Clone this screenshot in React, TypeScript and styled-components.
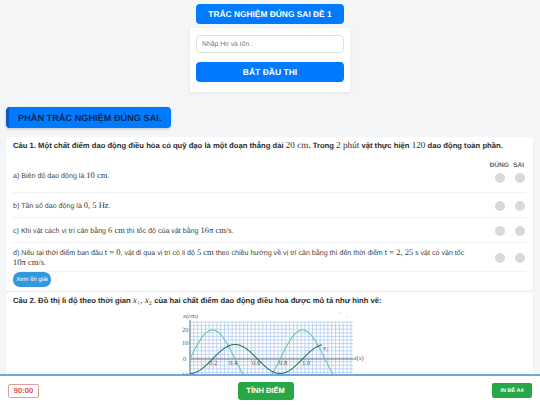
import React from "react";
import styled, { createGlobalStyle } from "styled-components";

const Global = createGlobalStyle`
  html, body { margin: 0; padding: 0; background: #f3f5f7; }
  html { scrollbar-width: none; }
  body { font-family: "Liberation Sans", Arial, sans-serif; color: #333; text-rendering: geometricPrecision; }
  * { box-sizing: border-box; }
  input, button { text-rendering: geometricPrecision; }
`;

const Page = styled.div`
  padding-top: 4px;
  display: flex;
  flex-direction: column;
`;
const TopColumn = styled.div`
  width: 160px;
  margin: 0 auto;
  display: flex;
  flex-direction: column;
  align-items: center;
`;
const TitleButton = styled.div`
  width: 148px;
  height: 20px;
  background: #007bff;
  color: #fff;
  border-radius: 4px;
  font-size: 8.4px;
  font-weight: 700;
  display: flex;
  align-items: center;
  justify-content: center;
  white-space: nowrap;
`;
const LoginCard = styled.div`
  width: 160px;
  height: 64px;
  margin-top: 4px;
  background: #fff;
  box-shadow: 0 1px 3px rgba(0,0,0,.08);
  padding: 7px 6px 0;
  display: flex;
  flex-direction: column;
`;
const NameInput = styled.input`
  width: 148px;
  height: 18px;
  border: 1px solid #dfe2e5;
  border-radius: 4px;
  padding: 0 5px;
  font: 6.8px "Liberation Sans", Arial, sans-serif;
  background: #fff;
  &::placeholder { color: #777; opacity: 1; }
`;
const StartButton = styled.button`
  width: 148px;
  height: 20px;
  margin-top: 9px;
  background: #007bff;
  color: #fff;
  border: 0;
  border-radius: 4px;
  padding: 0;
  font: 700 8.5px "Liberation Sans", Arial, sans-serif;
`;
const SectionHeader = styled.h2`
  width: 165px;
  height: 21px;
  margin: 15px 0 0 6px;
  background: #007bff;
  border-left: 3px solid #0a58ca;
  border-radius: 4px;
  box-shadow: 0 1px 3px rgba(0,0,0,.2);
  color: #0a2a55;
  font-size: 9.2px;
  font-weight: 700;
  display: flex;
  align-items: center;
  padding-left: 9px;
  white-space: nowrap;
`;
const QuestionCard = styled.section`
  width: 527px;
  margin: 9px 0 0 6px;
  padding: 1px 7px 4px;
  background: #fff;
  border-radius: 4px;
  box-shadow: 0 1px 2px rgba(0,0,0,.06);
  & + & { margin-top: 1px; }
`;
const QuestionTitle = styled.p`
  margin: 0;
  height: 16px;
  font-size: 7.66px;
  line-height: 16px;
  font-weight: 700;
  color: #2b2b2b;
  white-space: nowrap;
`;
const MathText = styled.span`
  font-family: "Liberation Serif", "DejaVu Serif", serif;
  font-weight: 400;
  font-size: 1.2em;
  line-height: 0;
  color: #333;
`;
const Rows = styled.div`
  display: flex;
  flex-direction: column;
`;
const Row = styled.div<{ $h: number }>`
  height: ${p => p.$h}px;
  padding-top: 2px;
  display: flex;
  align-items: center;
  justify-content: space-between;
  border-bottom: 1px solid #f0f1f2;
  position: relative;
`;
const RowText = styled.div<{ $drop?: number }>`
  width: 476px;
  margin-top: ${p => p.$drop ?? 0}px;
  font-size: 7.1px;
  line-height: 10.5px;
  color: #444;
`;
const Choices = styled.div<{ $drop?: number }>`
  display: flex;
  gap: 10px;
  padding-right: 1px;
  margin-top: ${p => p.$drop ?? 0}px;
`;
const Dot = styled.span`
  width: 10px;
  height: 10px;
  border-radius: 50%;
  background: #d9d9d9;
`;
const Heads = styled.div`
  position: absolute;
  right: 2px;
  top: 8px;
  display: flex;
  gap: 4px;
  font-size: 6.6px;
  font-weight: 700;
  color: #666;
`;
const SolutionButton = styled.button`
  display: block;
  width: 38px;
  height: 15px;
  margin: 0;
  padding: 0;
  border: 0;
  border-radius: 7px;
  background: #3498db;
  color: #fff;
  font: 6px "Liberation Sans", Arial, sans-serif;
`;
const Figure = styled.svg`
  display: block;
  margin: -2px auto 0;
`;
const Footer = styled.footer`
  position: fixed;
  left: 0;
  right: 0;
  bottom: 0;
  height: 31px;
  background: #fff;
  border-top: 2px solid #6fa8dc;
  padding: 0 8px;
  display: flex;
  align-items: center;
  justify-content: space-between;
`;
const Timer = styled.div`
  width: 31px;
  height: 14px;
  border: 1px solid #e0a0a0;
  border-radius: 2px;
  color: #d9534f;
  font-size: 7.6px;
  font-weight: 700;
  display: flex;
  align-items: center;
  justify-content: center;
`;
const ScoreButton = styled.button`
  width: 56px;
  height: 18px;
  border: 0;
  padding: 0;
  border-radius: 3px;
  background: #28a745;
  color: #fff;
  font: 700 7.5px "Liberation Sans", Arial, sans-serif;
`;
const PrintButton = styled.button`
  width: 40px;
  height: 15px;
  border: 0;
  padding: 0;
  border-radius: 2px;
  background: #28a745;
  color: #fff;
  font: 700 5.5px "Liberation Sans", Arial, sans-serif;
`;

const curve = (fn: (x: number) => number, x0: number, x1: number) => {
  const pts: string[] = [];
  for (let x = x0; x <= x1; x += 1) pts.push(`${x},${fn(x).toFixed(2)}`);
  return pts.join(" ");
};

const Chart = () => {
  const ox = 40;
  const oy = 52;
  const T = 90;
  const vs: number[] = [];
  for (let x = ox; x <= 203; x += 3.83) vs.push(x);
  const hs: number[] = [];
  for (let y = 15; y <= 130; y += 3.6) hs.push(y);
  const g = (x: number) => oy - 29 * Math.sin((2 * Math.PI * (x - ox)) / T);
  const d = (x: number) => oy + 14.5 * Math.cos((2 * Math.PI * (x - ox)) / T);
  return (
    <Figure width="240" height="130" viewBox="0 0 240 130">
      {vs.map(x => <line key={x} x1={x} x2={x} y1="15" y2="130" stroke="#9dbcf0" strokeWidth=".6" />)}
      {hs.map(y => <line key={y} x1={ox} x2="203" y1={y} y2={y} stroke="#9dbcf0" strokeWidth=".6" />)}
      <line x1={ox} x2="205" y1={oy} y2={oy} stroke="#555" strokeWidth=".8" />
      <line x1={ox} x2={ox} y1="13" y2="130" stroke="#555" strokeWidth=".8" />
      <polyline points={curve(g, ox, 183)} fill="none" stroke="#6cc7a0" strokeWidth="1.1" />
      <polyline points={curve(d, ox, 172)} fill="none" stroke="#2f7a5c" strokeWidth="1.1" />
      <g fontFamily="Liberation Serif, serif" fontSize="6.5" fill="#555">
        <text x="33" y="11" fontStyle="italic">x(cm)</text>
        <text x="32" y="25">20</text>
        <text x="32" y="38">10</text>
        <text x="33" y="54">0</text>
        <text x="32" y="70">10</text>
        <text x="59" y="58">0.2</text>
        <text x="79" y="58">0.4</text>
        <text x="102" y="58">0.6</text>
        <text x="129" y="58">0.8</text>
        <text x="152" y="58">1.0</text>
        <text x="205" y="53">t(s)</text>
        <text x="173" y="43" fill="#c2185b" fontStyle="italic">x₂</text>
        <circle cx="190" cy="6" r=".4" />
        <circle cx="197" cy="10" r=".4" />
      </g>
    </Figure>
  );
};

export default function App() {
  return (
    <Page>
      <Global />
      <TopColumn>
        <TitleButton>TRẮC NGHIỆM ĐÚNG SAI ĐỀ 1</TitleButton>
        <LoginCard>
          <NameInput placeholder="Nhập Họ và tên :" />
          <StartButton>BẮT ĐẦU THI</StartButton>
        </LoginCard>
      </TopColumn>
      <SectionHeader>PHẦN TRẮC NGHIỆM ĐÚNG SAI.</SectionHeader>
      <QuestionCard>
        <QuestionTitle>
          Câu 1. Một chất điểm dao động điều hòa có quỹ đạo là một đoạn thẳng dài <MathText>20 cm</MathText>. Trong <MathText>2 phút</MathText> vật thực hiện <MathText>120</MathText> dao động toàn phần.
        </QuestionTitle>
        <Rows>
          <Row $h={39}>
            <RowText $drop={4}>a) Biên độ dao động là <MathText>10 cm</MathText>.</RowText>
            <Heads><span>ĐÚNG</span><span>SAI</span></Heads>
            <Choices $drop={7}><Dot /><Dot /></Choices>
          </Row>
          <Row $h={25}>
            <RowText>b) Tần số dao động là <MathText>0, 5 Hz</MathText>.</RowText>
            <Choices><Dot /><Dot /></Choices>
          </Row>
          <Row $h={25}>
            <RowText>c) Khi vật cách vị trí cân bằng <MathText>6 cm</MathText> thì tốc độ của vật bằng <MathText>16π cm/s</MathText>.</RowText>
            <Choices><Dot /><Dot /></Choices>
          </Row>
          <Row $h={29}>
            <RowText>d) Nếu tại thời điểm ban đầu <MathText>t = 0</MathText>, vật đi qua vị trí có li độ <MathText>5 cm</MathText> theo chiều hướng về vị trí cân bằng thì đến thời điểm <MathText>t = 2, 25 s</MathText> vật có vận tốc<br /><MathText>10π cm/s</MathText>.</RowText>
            <Choices><Dot /><Dot /></Choices>
          </Row>
        </Rows>
        <SolutionButton>Xem lời giải</SolutionButton>
      </QuestionCard>
      <QuestionCard>
        <QuestionTitle>
          Câu 2. Đồ thị li độ theo thời gian <MathText><i>x</i>₁, <i>x</i>₂</MathText> của hai chất điểm dao động điều hoà được mô tả như hình vẽ:
        </QuestionTitle>
        <Chart />
      </QuestionCard>
      <Footer>
        <Timer>90:00</Timer>
        <ScoreButton>TÍNH ĐIỂM</ScoreButton>
        <PrintButton>IN ĐỀ A4</PrintButton>
      </Footer>
    </Page>
  );
}
